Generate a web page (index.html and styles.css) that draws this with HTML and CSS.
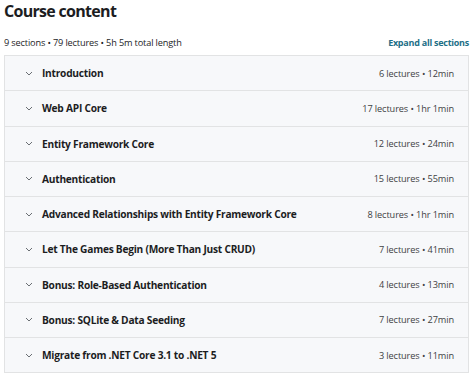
FILE: index.html
```html
<!DOCTYPE html>
<html lang="en">
<head>
  <meta charset="UTF-8" />
  <title>Course content</title>
  <link rel="stylesheet" href="styles.css">
</head>
<body>

<div class="curriculum">
  <h2>Course content</h2>
  <div class="meta-bar">
    <span class="meta">9 sections • 79 lectures • 5h 5m total length</span>
    <a href="#" class="expand">Expand all sections</a>
  </div>

  <div class="sections">
    <div class="section">
      <span class="chevron"><svg width="8" height="5" viewBox="0 0 8 5"><path d="M1 1l3 3 3-3" fill="none" stroke="#6a6f73" stroke-width="1"/></svg></span>
      <span class="title">Introduction</span>
      <span class="info">6 lectures • 12min</span>
    </div>
    <div class="section">
      <span class="chevron"><svg width="8" height="5" viewBox="0 0 8 5"><path d="M1 1l3 3 3-3" fill="none" stroke="#6a6f73" stroke-width="1"/></svg></span>
      <span class="title">Web API Core</span>
      <span class="info">17 lectures • 1hr 1min</span>
    </div>
    <div class="section">
      <span class="chevron"><svg width="8" height="5" viewBox="0 0 8 5"><path d="M1 1l3 3 3-3" fill="none" stroke="#6a6f73" stroke-width="1"/></svg></span>
      <span class="title">Entity Framework Core</span>
      <span class="info">12 lectures • 24min</span>
    </div>
    <div class="section">
      <span class="chevron"><svg width="8" height="5" viewBox="0 0 8 5"><path d="M1 1l3 3 3-3" fill="none" stroke="#6a6f73" stroke-width="1"/></svg></span>
      <span class="title">Authentication</span>
      <span class="info">15 lectures • 55min</span>
    </div>
    <div class="section">
      <span class="chevron"><svg width="8" height="5" viewBox="0 0 8 5"><path d="M1 1l3 3 3-3" fill="none" stroke="#6a6f73" stroke-width="1"/></svg></span>
      <span class="title">Advanced Relationships with Entity Framework Core</span>
      <span class="info">8 lectures • 1hr 1min</span>
    </div>
    <div class="section">
      <span class="chevron"><svg width="8" height="5" viewBox="0 0 8 5"><path d="M1 1l3 3 3-3" fill="none" stroke="#6a6f73" stroke-width="1"/></svg></span>
      <span class="title">Let The Games Begin (More Than Just CRUD)</span>
      <span class="info">7 lectures • 41min</span>
    </div>
    <div class="section">
      <span class="chevron"><svg width="8" height="5" viewBox="0 0 8 5"><path d="M1 1l3 3 3-3" fill="none" stroke="#6a6f73" stroke-width="1"/></svg></span>
      <span class="title">Bonus: Role-Based Authentication</span>
      <span class="info">4 lectures • 13min</span>
    </div>
    <div class="section">
      <span class="chevron"><svg width="8" height="5" viewBox="0 0 8 5"><path d="M1 1l3 3 3-3" fill="none" stroke="#6a6f73" stroke-width="1"/></svg></span>
      <span class="title">Bonus: SQLite &amp; Data Seeding</span>
      <span class="info">7 lectures • 27min</span>
    </div>
    <div class="section">
      <span class="chevron"><svg width="8" height="5" viewBox="0 0 8 5"><path d="M1 1l3 3 3-3" fill="none" stroke="#6a6f73" stroke-width="1"/></svg></span>
      <span class="title">Migrate from .NET Core 3.1 to .NET 5</span>
      <span class="info">3 lectures • 11min</span>
    </div>
  </div>
</div>

</body>
</html>
```

FILE: styles.css
```css
body {
  margin: 0;
  background-color: #fff;
  font-family: 'Open Sans', 'Noto Sans', sans-serif;
  color: #1c1d1f;
}

.curriculum {
  padding: 0 5px 0 4px;
}

.curriculum h2 {
  margin: 0;
  font-size: 16px;
  font-weight: 700;
  line-height: 22px;
  letter-spacing: -0.7px;
}

.meta-bar {
  display: flex;
  justify-content: space-between;
  align-items: center;
  height: 22px;
  margin-top: 9px;
  margin-bottom: 2px;
}

.meta {
  font-size: 9.2px;
  letter-spacing: -0.15px;
  color: #1c1d1f;
}

.expand {
  font-size: 9px;
  font-weight: 700;
  letter-spacing: -0.25px;
  color: #1e6f87;
  text-decoration: none;
}

.sections {
  border: 1px solid #e2e3e4;
  border-bottom: none;
}

.section {
  display: flex;
  align-items: center;
  height: 34.25px;
  background-color: #f7f8fa;
  border-bottom: 1px solid #e2e3e4;
  padding: 0 14px 0 20px;
}

.chevron {
  display: flex;
  width: 17px;
}

.title {
  flex: 1;
  font-size: 10.2px;
  font-weight: 700;
  letter-spacing: -0.25px;
  white-space: nowrap;
}

.info {
  font-size: 9.2px;
  letter-spacing: -0.1px;
  color: #3e4143;
  white-space: nowrap;
}
```
